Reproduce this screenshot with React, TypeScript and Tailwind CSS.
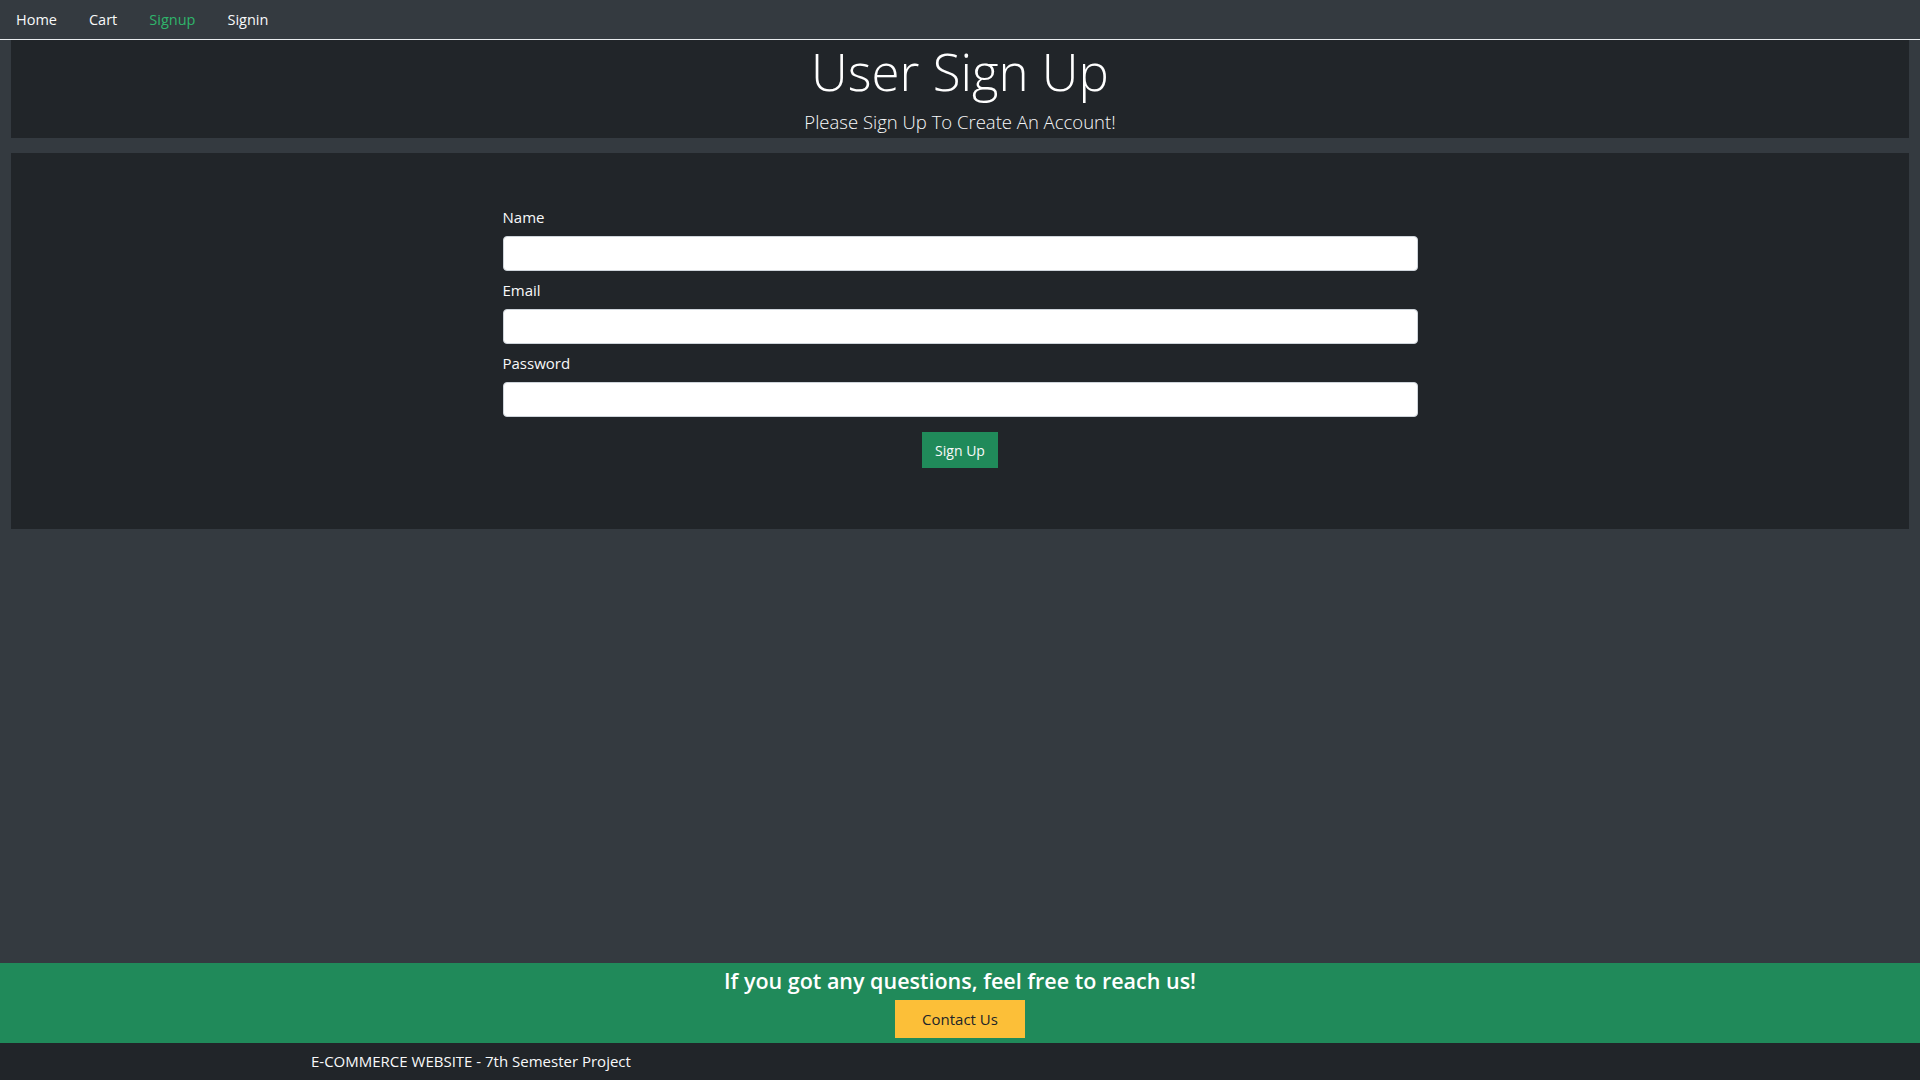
import React from "react";

const font = { fontFamily: '"Open Sans", "Noto Sans", sans-serif' };

const Field = ({ label, type }: { label: string; type: string }) => (
  <div className="flex flex-col">
    <label className="h-[22px] mb-2 text-[15px] leading-[22px] text-[#f8f9fa]">{label}</label>
    <input
      type={type}
      className="h-[35px] mb-2 w-full rounded-[4px] border border-[#ced4da] bg-white px-3 text-[15px] text-[#212529] outline-none"
    />
  </div>
);

export default function App() {
  return (
    <div style={font} className="min-h-screen w-full bg-[#343a40] flex flex-col text-white">
      {/* nav */}
      <nav className="h-[40px] flex items-center border-b border-[#e9ecef] text-[14.5px]">
        <a className="px-4 text-[#f8f9fa]">Home</a>
        <a className="px-4 text-[#f8f9fa]">Cart</a>
        <a className="px-4 text-[#2fb46b]">Signup</a>
        <a className="px-4 text-[#f8f9fa]">Signin</a>
      </nav>

      <main className="px-[11px]">
        {/* header */}
        <section className="h-[98px] bg-[#212529] flex flex-col items-center text-center">
          <h1 className="mt-[1px] text-[51px] font-light leading-[60px] text-white">User Sign Up</h1>
          <p className="mt-[9px] text-[18.5px] font-light leading-[24px] text-[#f8f9fa]">Please Sign Up To Create An Account!</p>
        </section>

        {/* form */}
        <section className="mt-[15px] h-[376px] bg-[#212529] flex justify-center pt-[53px]">
          <form className="w-[915px] flex flex-col" onSubmit={(e) => e.preventDefault()}>
            <Field label="Name" type="text" />
            <Field label="Email" type="email" />
            <Field label="Password" type="password" />
            <div className="flex justify-center mt-[7px]">
              <button className="h-[36px] w-[76px] bg-[#208a5a] text-[14px] text-[#f8f9fa]">Sign Up</button>
            </div>
          </form>
        </section>
      </main>

      {/* footer */}
      <footer className="mt-auto">
        <div className="h-[80px] bg-[#208a5a] flex flex-col items-center pt-[4px]">
          <h4 className="h-[29px] text-[21.5px] font-semibold leading-[28px] text-white">If you got any questions, feel free to reach us!</h4>
          <button className="mt-[4px] h-[38px] w-[130px] bg-[#fcbf38] text-[15px] text-[#212529]">Contact Us</button>
        </div>
        <div className="h-[37px] bg-[#212529] flex items-center pl-[311px] text-[15px] text-[#f8f9fa]">
          E-COMMERCE WEBSITE - 7th Semester Project
        </div>
      </footer>
    </div>
  );
}
